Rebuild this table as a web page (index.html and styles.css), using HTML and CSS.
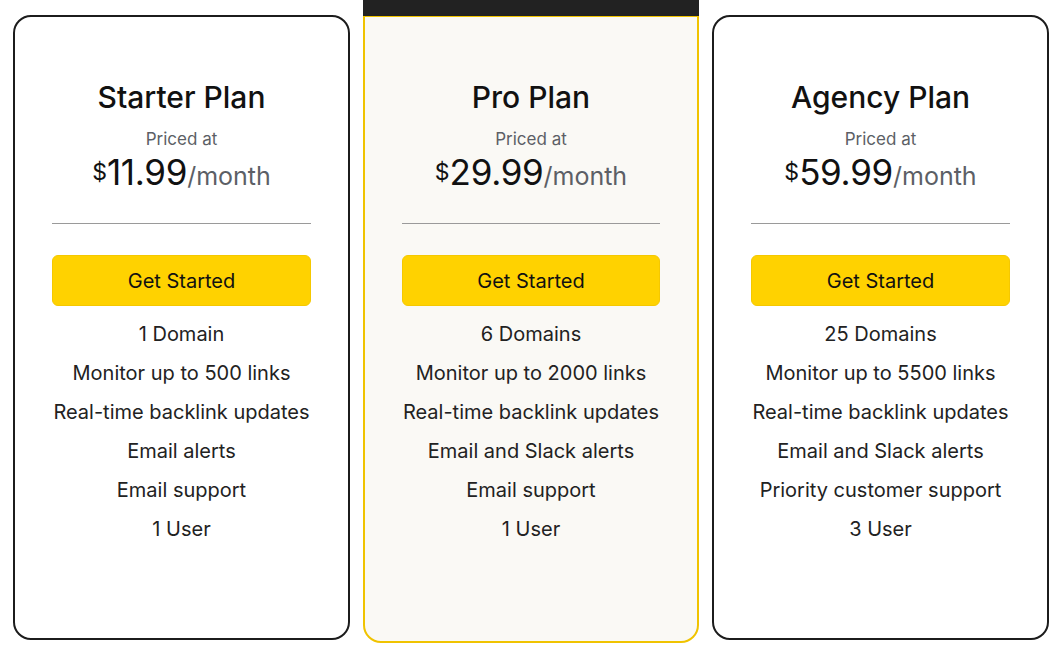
FILE: index.html
```html
<!DOCTYPE html>
<html lang="en">
<head>
<meta charset="utf-8">
<title>Pricing</title>
<link rel="stylesheet" href="styles.css">
</head>
<body>
<main class="plans">
  <section class="card">
    <h2 class="plan-name">Starter Plan</h2>
    <p class="priced">Priced at</p>
    <p class="price"><span class="cur">$</span><span class="amt">11.99</span><span class="per">/month</span></p>
    <hr class="rule">
    <a class="btn" href="#">Get Started</a>
    <ul class="features">
      <li>1 Domain</li>
      <li>Monitor up to 500 links</li>
      <li>Real-time backlink updates</li>
      <li>Email alerts</li>
      <li>Email support</li>
      <li>1 User</li>
    </ul>
  </section>
  <section class="card card-pro">
    <div class="pro-badge"></div>
    <h2 class="plan-name">Pro Plan</h2>
    <p class="priced">Priced at</p>
    <p class="price"><span class="cur">$</span><span class="amt">29.99</span><span class="per">/month</span></p>
    <hr class="rule">
    <a class="btn" href="#">Get Started</a>
    <ul class="features">
      <li>6 Domains</li>
      <li>Monitor up to 2000 links</li>
      <li>Real-time backlink updates</li>
      <li>Email and Slack alerts</li>
      <li>Email support</li>
      <li>1 User</li>
    </ul>
  </section>
  <section class="card">
    <h2 class="plan-name">Agency Plan</h2>
    <p class="priced">Priced at</p>
    <p class="price"><span class="cur">$</span><span class="amt">59.99</span><span class="per">/month</span></p>
    <hr class="rule">
    <a class="btn" href="#">Get Started</a>
    <ul class="features">
      <li>25 Domains</li>
      <li>Monitor up to 5500 links</li>
      <li>Real-time backlink updates</li>
      <li>Email and Slack alerts</li>
      <li>Priority customer support</li>
      <li>3 User</li>
    </ul>
  </section>
</main>
</body>
</html>
```

FILE: styles.css
```css
* { box-sizing: border-box; }
html, body { margin: 0; padding: 0; background: #ffffff; }
body {
  font-family: Inter, "Noto Sans", "Liberation Sans", sans-serif;
  color: #1a1a1a;
  width: 1064px;
  height: 657px;
  overflow: hidden;
}
.plans {
  display: grid;
  grid-template-columns: 337px 336px 337px;
  column-gap: 13px;
  padding: 15px 15px 0 13px;
  align-items: start;
}
.card {
  position: relative;
  height: 625px;
  border: 2px solid #1c1c1c;
  border-radius: 18px;
  background: #ffffff;
  padding: 60px 37px 0;
  display: flex;
  flex-direction: column;
  align-items: stretch;
  text-align: center;
}
.card-pro {
  height: 628px;
  background: #faf9f5;
  border-color: #f0c300;
  border-top-left-radius: 0;
  border-top-right-radius: 0;
}
.pro-badge {
  position: absolute;
  left: -2px;
  right: -2px;
  top: -17px;
  height: 16px;
  background: #222222;
}
.plan-name {
  margin: 0;
  font-size: 30px;
  font-weight: 500;
  line-height: 40px;
  color: #111;
}
.priced {
  margin: 10px 0 0;
  font-size: 17px;
  line-height: 24px;
  color: #5c5f66;
}
.price {
  margin: 5px 0 0;
  line-height: 32px;
  color: #111;
  white-space: nowrap;
}
.cur { font-size: 23px; vertical-align: 5px; }
.amt { font-size: 35px; letter-spacing: -0.3px; }
.per { font-size: 25px; color: #5c5f66; }
.rule {
  margin: 28px 0 0;
  border: 0;
  border-top: 1px solid #9a9a9a;
  height: 0;
}
.btn {
  margin-top: 31px;
  height: 51px;
  display: flex;
  align-items: center;
  justify-content: center;
  background: #ffd200;
  border: 1px solid #f5c800;
  border-radius: 6px;
  color: #111;
  font-size: 20px;
  text-decoration: none;
}
.features {
  list-style: none;
  margin: 9px 0 0;
  padding: 0;
  font-size: 20px;
  line-height: 39px;
  color: #222;
  white-space: nowrap;
}
```
